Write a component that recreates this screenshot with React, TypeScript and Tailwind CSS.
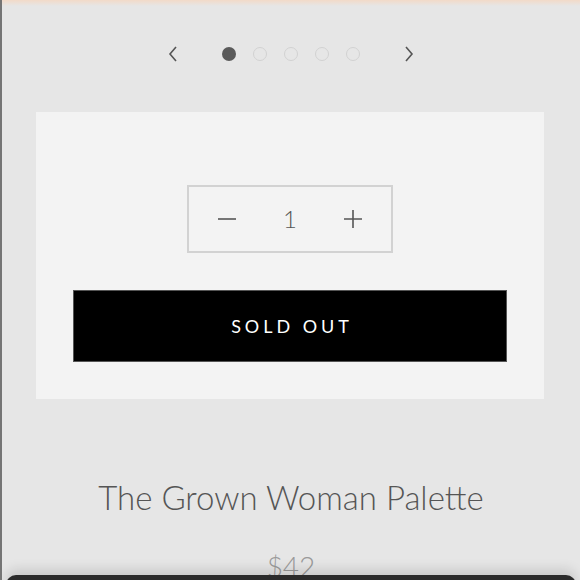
import React from "react";

const FONT = { fontFamily: '"Lato", "Liberation Sans", sans-serif' };

const Chevron = ({ dir }: { dir: "left" | "right" }) => (
  <svg width="12" height="18" viewBox="0 0 12 18" fill="none" stroke="#555" strokeWidth="1.6">
    {dir === "left" ? <path d="M9 2L3 9l6 7" /> : <path d="M3 2l6 7-6 7" />}
  </svg>
);

export default function App() {
  const dots = [0, 1, 2, 3, 4];

  return (
    <div className="relative w-[580px] h-[580px] overflow-hidden bg-[#e6e6e6] border-l-2 border-[#757575]" style={FONT}>
      <div className="h-[6px] bg-gradient-to-b from-[#f2dac8] to-[#e6e6e6]" />

      {/* carousel nav */}
      <div className="flex items-center justify-center h-[94px] pt-[2px]">
        <div className="flex items-center ml-[0px]">
          <Chevron dir="left" />
          <div className="flex items-center gap-[17px] ml-[43px] mr-[43px]">
            {dots.map((d) => (
              <span
                key={d}
                className={
                  d === 0
                    ? "w-[14px] h-[14px] rounded-full bg-[#5a5a5a]"
                    : "w-[14px] h-[14px] rounded-full border-[1.5px] border-[#d2d2d2]"
                }
              />
            ))}
          </div>
          <Chevron dir="right" />
        </div>
      </div>

      {/* purchase panel */}
      <div className="ml-[34px] mr-[36px] mt-[12px] bg-[#f3f3f3] flex flex-col items-center pt-[73px] pb-[37px] px-[37px]">
        <div className="w-[206px] h-[68px] border-2 border-[#d2d2d2] flex items-center justify-between px-[29px]">
          <svg width="18" height="18" viewBox="0 0 18 18" stroke="#555" strokeWidth="1.6">
            <path d="M0 9h18" />
          </svg>
          <span className="text-[24px] font-light text-[#555] leading-none">1</span>
          <svg width="18" height="18" viewBox="0 0 18 18" stroke="#555" strokeWidth="1.6">
            <path d="M0 9h18M9 0v18" />
          </svg>
        </div>
        <button className="mt-[37px] w-full h-[72px] bg-black border border-[#555] text-white text-[18px] tracking-[0.22em] pl-[0.22em]">
          SOLD OUT
        </button>
      </div>

      {/* title and price */}
      <h1 className="mt-[78px] text-center text-[33px] text-[#555] leading-[40px] font-light">
        The Grown Woman Palette
      </h1>
      <p className="mt-[35px] text-center text-[28px] text-[#9a9a9a] font-light leading-none">$42</p>

      {/* bottom sheet overlapping */}
      <div className="absolute left-[4px] right-[4px] top-[575px] h-[40px] rounded-t-[10px] bg-[#2b2b2b] shadow-[0_-6px_12px_rgba(0,0,0,0.12)]" />
    </div>
  );
}
